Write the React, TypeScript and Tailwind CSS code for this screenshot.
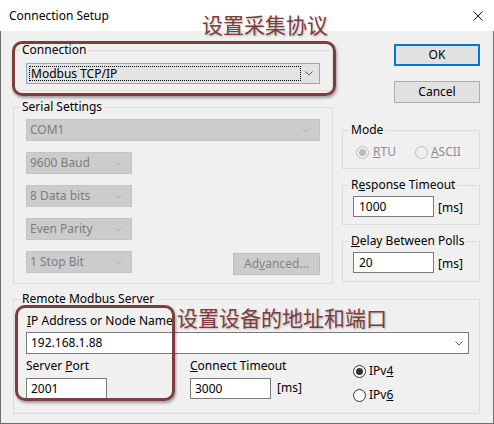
import React from "react";

const ff = { fontFamily: "'Noto Sans', 'Noto Sans CJK SC', sans-serif" };

function Chevron({ color = "#606060" }: { color?: string }) {
  return (
    <svg width="8" height="5" viewBox="0 0 8 5" className="shrink-0">
      <path d="M0.5 0.5 L4 4 L7.5 0.5" fill="none" stroke={color} strokeWidth="1" />
    </svg>
  );
}

function Group({
  label,
  className,
  inner,
  children,
}: {
  label: React.ReactNode;
  className: string;
  inner: string;
  children: React.ReactNode;
}) {
  return (
    <fieldset className={"border border-[#dcdcdc] " + className}>
      <legend className="ml-[6px] px-[2px] leading-[16px] text-[12px] text-black">{label}</legend>
      <div className={inner}>{children}</div>
    </fieldset>
  );
}

function DisabledCombo({ value, wide }: { value: string; wide?: boolean }) {
  return (
    <div
      className={
        (wide ? "w-[294px] " : "w-[106px] ") +
        "h-[22px] bg-[#cccccc] border border-[#c4c4c4] flex items-center justify-between pl-[3px] pr-[9px] text-[12px] text-[#7d7d7d]"
      }
    >
      <span>{value}</span>
      <Chevron color="#b0b0b0" />
    </div>
  );
}

function TextBox({ value, className }: { value: string; className: string }) {
  return (
    <div className={"h-[21px] bg-white border border-[#7a7a7a] flex items-center pl-[4px] text-[12px] text-black " + className}>
      {value}
    </div>
  );
}

function Radio({ checked, disabled }: { checked?: boolean; disabled?: boolean }) {
  return (
    <span
      className={
        "w-[13px] h-[13px] rounded-full border flex items-center justify-center shrink-0 " +
        (disabled ? "border-[#bcbcbc] bg-[#f0f0f0]" : "border-[#333333] bg-white")
      }
    >
      {checked && (
        <span className={"w-[7px] h-[7px] rounded-full " + (disabled ? "bg-[#bcbcbc]" : "bg-[#333333]")} />
      )}
    </span>
  );
}

export default function App() {
  return (
    <div className="relative w-[494px] h-[424px] flex flex-col bg-[#f0f0f0] text-[12px] text-black" style={ff}>
      {/* title bar */}
      <div className="h-[31px] bg-white flex items-center justify-between pl-[9px] pr-[10px] shrink-0">
        <span className="text-[12px] leading-[16px]">Connection Setup</span>
        <svg width="10" height="10" viewBox="0 0 10 10" className="mr-[1px]">
          <path d="M0.5 0.5 L9.5 9.5 M9.5 0.5 L0.5 9.5" stroke="#111" strokeWidth="1" />
        </svg>
      </div>

      {/* body */}
      <div className="flex-1 border-x border-b border-[#6e6e6e] pl-[12px]">
        <div className="flex items-start">
          {/* left column */}
          <div className="w-[315px] flex flex-col">
            <Group label="Connection" className="mt-[11px] pt-[5px] pb-[6px]" inner="px-[12px]">
              <div className="w-[294px] h-[21px] bg-[#e3e3e3] border border-[#89abd0] flex items-center justify-between pl-[2px] pr-[6px]">
                <div className="w-[272px] h-[15px] border border-dotted border-black flex items-center pl-[1px] leading-none">
                  Modbus TCP/IP
                </div>
                <Chevron />
              </div>
            </Group>

            <Group label="Serial Settings" className="mt-[8px] pt-[4px] pb-[8px]" inner="px-[12px]">
              <DisabledCombo value="COM1" wide />
              <div className="mt-[11px]">
                <DisabledCombo value="9600 Baud" />
              </div>
              <div className="mt-[11px]">
                <DisabledCombo value="8 Data bits" />
              </div>
              <div className="mt-[11px]">
                <DisabledCombo value="Even Parity" />
              </div>
              <div className="mt-[11px] w-[294px] flex justify-between items-start">
                <DisabledCombo value="1 Stop Bit" />
                <div className="mt-[2px] w-[87px] h-[22px] bg-[#cccccc] border border-[#bfbfbf] flex items-center justify-center text-[#838383]">
                  <span>
                    Ad<span className="underline">v</span>anced...
                  </span>
                </div>
              </div>
            </Group>
          </div>

          {/* right column */}
          <div className="ml-[14px] w-[138px] flex flex-col">
            <div className="ml-[52px] mt-[13px] w-[86px] h-[22px] border-2 border-[#0078d7] bg-[#e1e1e1] flex items-center justify-center">
              OK
            </div>
            <div className="ml-[52px] mt-[15px] w-[86px] h-[22px] border border-[#adadad] bg-[#e1e1e1] flex items-center justify-center">
              Cancel
            </div>

            <Group label="Mode" className="mt-[19px] pt-[6px] pb-[8px]" inner="pl-[13px]">
              <div className="flex items-center h-[16px] text-[#8d8d8d]">
                <Radio checked disabled />
                <span className="ml-[4px]">
                  <span className="underline">R</span>TU
                </span>
                <span className="ml-[19px]">
                  <Radio disabled />
                </span>
                <span className="ml-[3px]">
                  <span className="underline">A</span>SCII
                </span>
              </div>
            </Group>

            <Group
              label={
                <span>
                  R<span className="underline">e</span>sponse Timeout
                </span>
              }
              className="mt-[8px] pt-[3px] pb-[7px]"
              inner="pl-[10px]"
            >
              <div className="flex items-center">
                <TextBox value="1000" className="w-[81px] pl-[5px]" />
                <span className="ml-[4px] mt-[2px]">[ms]</span>
              </div>
            </Group>

            <Group
              label={
                <span>
                  <span className="underline">D</span>elay Between Polls
                </span>
              }
              className="mt-[8px] pt-[3px] pb-[8px]"
              inner="pl-[10px]"
            >
              <div className="flex items-center">
                <TextBox value="20" className="w-[81px] pl-[5px]" />
                <span className="ml-[4px] mt-[2px]">[ms]</span>
              </div>
            </Group>
          </div>
        </div>

        {/* Remote Modbus Server */}
        <Group label="Remote Modbus Server" className="mt-[7px] w-[467px] pt-[6px] pb-[10px]" inner="pl-[12px]">
          <div className="leading-[16px] pl-[1px]">
            <span className="underline">I</span>P Address or Node Name
          </div>
          <div className="mt-[3px] w-[443px] h-[22px] bg-white border border-[#7a7a7a] flex items-center justify-between pl-[4px] pr-[5px]">
            <span>192.168.1.88</span>
            <Chevron />
          </div>
          <div className="mt-[4px] flex items-start">
            <div className="w-[164px]">
              <div className="leading-[16px]">
                Server <span className="underline">P</span>ort
              </div>
              <TextBox value="2001" className="mt-[4px] w-[81px]" />
            </div>
            <div className="w-[163px]">
              <div className="leading-[16px]">
                <span className="underline">C</span>onnect Timeout
              </div>
              <div className="mt-[4px] flex items-center">
                <TextBox value="3000" className="w-[81px]" />
                <span className="ml-[6px] -mt-[1px]">[ms]</span>
              </div>
            </div>
            <div className="flex flex-col mt-[5px]">
              <div className="flex items-center h-[16px]">
                <Radio checked />
                <span className="ml-[3px]">
                  IPv<span className="underline">4</span>
                </span>
              </div>
              <div className="flex items-center h-[16px] mt-[8px]">
                <Radio />
                <span className="ml-[3px]">
                  IPv<span className="underline">6</span>
                </span>
              </div>
            </div>
          </div>
        </Group>
      </div>

      {/* annotations */}
      <div className="absolute left-[12px] top-[41px] w-[324px] h-[55px] border-[3px] border-[#7b3f3f] rounded-[10px] shadow-[1px_2px_3px_rgba(0,0,0,0.35)]" />
      <div className="absolute left-[15px] top-[305px] w-[160px] h-[96px] border-[3px] border-[#7b3f3f] rounded-[10px] shadow-[1px_2px_3px_rgba(0,0,0,0.35)]" />
      <div
        className="absolute left-[202px] top-[12px] text-[21px] leading-[24px] text-[#7e3d3d] [text-shadow:1px_1px_2px_rgba(0,0,0,0.25)]"
        style={{ fontFamily: "'Noto Sans CJK SC', sans-serif" }}
      >
        设置采集协议
      </div>
      <div
        className="absolute left-[177px] top-[305px] text-[21px] leading-[24px] text-[#7e3d3d] [text-shadow:1px_1px_2px_rgba(0,0,0,0.25)]"
        style={{ fontFamily: "'Noto Sans CJK SC', sans-serif" }}
      >
        设置设备的地址和端口
      </div>
    </div>
  );
}
